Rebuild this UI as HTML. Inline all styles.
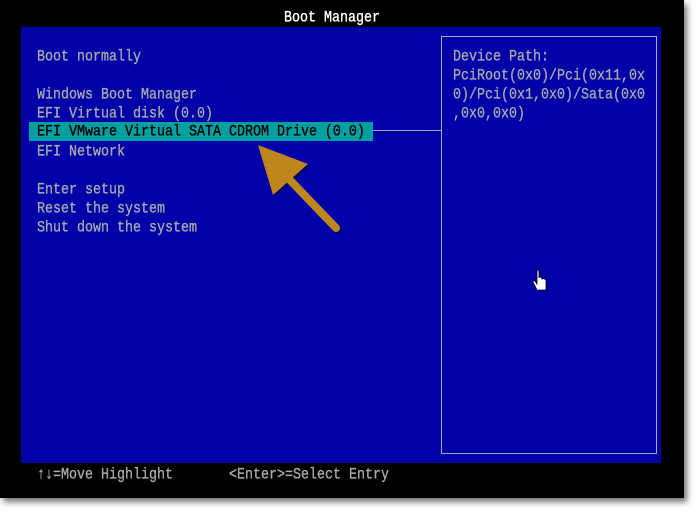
<!DOCTYPE html>
<html><head><meta charset="utf-8"><style>
html,body{margin:0;padding:0;background:#fff;width:698px;height:513px;overflow:hidden;position:relative}
.scr{position:absolute;left:0;top:0;width:684px;height:498px;background:#000;box-shadow:3px 4px 6px rgba(0,0,0,.55)}
.blue{position:absolute;left:21px;top:27px;width:640px;height:436px;background:#0000a8}
.t{position:absolute;font-family:"Liberation Mono","DejaVu Sans Mono",monospace;font-size:13.33px;line-height:19px;color:#a8a8a8;white-space:pre;transform:scaleY(1.2);transform-origin:0 50%;-webkit-text-stroke:0.3px currentColor}
.box{position:absolute;left:441px;top:36px;width:214px;height:416px;border:1px solid #a8a8a8}
.hl{position:absolute;left:29px;top:122px;width:344px;height:19px;background:#00a0a0}
.ln{position:absolute;left:373px;top:130px;width:68px;height:1px;background:#a8a8a8}
</style></head><body>
<div class="scr"></div>
<div class="blue"></div>
<div class="t" style="left:284px;top:9px;color:#fff">Boot Manager</div>
<div class="box"></div>
<div class="hl"></div>
<div class="ln"></div>
<div class="t" style="left:37px;top:48px">Boot normally</div>
<div class="t" style="left:37px;top:86px">Windows Boot Manager</div>
<div class="t" style="left:37px;top:105px">EFI Virtual disk (0.0)</div>
<div class="t" style="left:37px;top:123px;color:#000">EFI VMware Virtual SATA CDROM Drive (0.0)</div>
<div class="t" style="left:37px;top:143px">EFI Network</div>
<div class="t" style="left:37px;top:181px">Enter setup</div>
<div class="t" style="left:37px;top:200px">Reset the system</div>
<div class="t" style="left:37px;top:219px">Shut down the system</div>
<div class="t" style="left:453px;top:48px">Device Path:</div>
<div class="t" style="left:453px;top:67px">PciRoot(0x0)/Pci(0x11,0x</div>
<div class="t" style="left:453px;top:86px">0)/Pci(0x1,0x0)/Sata(0x0</div>
<div class="t" style="left:453px;top:105px">,0x0,0x0)</div>
<div class="t" style="left:37px;top:466px">↑↓=Move Highlight</div>
<div class="t" style="left:229px;top:466px">&lt;Enter&gt;=Select Entry</div>
<svg style="position:absolute;left:0;top:0" width="698" height="513">
<g fill="#000" opacity=".35" transform="translate(2,2)">
<polygon points="258,145 308,164 273,195"/>
<line x1="288" y1="178" x2="336" y2="228" stroke="#000" stroke-width="8" stroke-linecap="round"/>
</g>
<polygon points="258,145 308,164 273,195" fill="#c0861e"/>
<line x1="288" y1="178" x2="336" y2="228" stroke="#c0861e" stroke-width="8" stroke-linecap="round"/>
<path d="M537,272 v12 l-2,-3 q-2,-1 -2,1 l4,8 h9 v-9 q0,-2 -2,-2 q-1,-1 -2,0 q0,-2 -2,-2 q-1,0 -1,1 v-6 q0,-2 -1,-2 q-1,0 -1,2z" fill="#fff" stroke="#000" stroke-width="0.8"/>
</svg>
</body></html>
